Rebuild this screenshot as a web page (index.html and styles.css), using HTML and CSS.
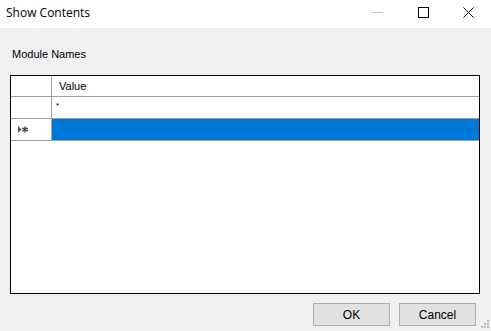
FILE: index.html
```html
<!DOCTYPE html>
<html lang="en">
<head>
    <meta charset="UTF-8">
    <title>Show Contents</title>
    <link rel="stylesheet" href="styles.css">
</head>
<body>
<div class="window">
    <!--标题栏-->
    <div class="title_bar">
        <span class="title_text">Show Contents</span>
        <div class="title_buttons">
            <span class="tb_btn tb_min">
                <svg width="11" height="11" viewBox="0 0 11 11"><line x1="0" y1="5.5" x2="11" y2="5.5" stroke="#c8c8c8" stroke-width="1"/></svg>
            </span>
            <span class="tb_btn tb_max">
                <svg width="11" height="11" viewBox="0 0 11 11"><rect x="0.5" y="0.5" width="10" height="10" fill="none" stroke="#000" stroke-width="1"/></svg>
            </span>
            <span class="tb_btn tb_close">
                <svg width="11" height="11" viewBox="0 0 11 11"><path d="M0.5 0.5 L10.5 10.5 M10.5 0.5 L0.5 10.5" stroke="#000" stroke-width="1"/></svg>
            </span>
        </div>
    </div>

    <div class="content">
        <p class="label">Module Names</p>

        <div class="grid">
            <div class="grid_row grid_head">
                <div class="row_head"></div>
                <div class="cell">Value</div>
            </div>
            <div class="grid_row">
                <div class="row_head"></div>
                <div class="cell cell_star">*</div>
            </div>
            <div class="grid_row">
                <div class="row_head">
                    <svg width="10" height="7" viewBox="0 0 10 7">
                        <polygon points="0,0 3.5,3.5 0,7" fill="#505050"/>
                        <path d="M7 0.5 V6.5 M4.2 2 L9.8 5 M9.8 2 L4.2 5" stroke="#505050" stroke-width="1.5"/>
                    </svg>
                </div>
                <div class="cell cell_selected"></div>
            </div>
        </div>

        <div class="buttons">
            <button class="btn" type="button">OK</button>
            <button class="btn" type="button">Cancel</button>
        </div>
    </div>

    <div class="size_grip">
        <svg width="8" height="8" viewBox="0 0 8 8" fill="#b8b8b8">
            <rect x="6" y="0" width="2" height="2"/>
            <rect x="3" y="3" width="2" height="2"/>
            <rect x="6" y="3" width="2" height="2"/>
            <rect x="0" y="6" width="2" height="2"/>
            <rect x="3" y="6" width="2" height="2"/>
            <rect x="6" y="6" width="2" height="2"/>
        </svg>
    </div>
</div>
</body>
</html>
```

FILE: styles.css
```css
* {
    margin: 0px;
    padding: 0px;
    box-sizing: border-box;
}

body {
    background-color: #f0f0f0;
    font-family: "Liberation Sans", Arial, sans-serif;
    font-size: 11px;
    color: #000;
}

.window {
    width: 491px;
    height: 331px;
    position: relative;
    display: flex;
    flex-direction: column;
}

/*标题栏*/
.title_bar {
    height: 28px;
    background-color: white;
    display: flex;
    align-items: center;
    justify-content: space-between;
}

.title_text {
    font-family: "Open Sans", "Noto Sans", sans-serif;
    font-size: 12px;
    padding-left: 6px;
    margin-top: -3px;
}

.title_buttons {
    display: flex;
    margin-top: -3px;
}

.tb_btn {
    width: 45px;
    height: 20px;
    display: flex;
    align-items: center;
    justify-content: center;
}

.tb_min {
    margin-right: 1px;
}

.content {
    flex: 1;
    padding: 19px 11px 0 10px;
    display: flex;
    flex-direction: column;
}

.label {
    padding-left: 2px;
    height: 28px;
    line-height: 14px;
}

/*数据表格*/
.grid {
    height: 219px;
    border: 1px solid #000;
    background-color: white;
}

.grid_row {
    display: flex;
    height: 22px;
    border-bottom: 1px solid #a0a0a0;
}

.grid_head {
    height: 21px;
}

.row_head {
    width: 41px;
    border-right: 1px solid #a0a0a0;
    display: flex;
    align-items: center;
    padding-left: 7px;
}

.cell {
    flex: 1;
    padding-left: 7px;
    line-height: 20px;
}

.cell_star {
    font-size: 8px;
    line-height: 18px;
    padding-left: 4px;
}

.cell_selected {
    background-color: #0078d7;
}

/*按钮*/
.buttons {
    display: flex;
    justify-content: flex-end;
    gap: 9px;
    padding-top: 9px;
    padding-right: 4px;
}

.btn {
    width: 77px;
    height: 23px;
    background-color: #e1e1e1;
    border: 1px solid #adadad;
    font-family: "Liberation Sans", Arial, sans-serif;
    font-size: 12px;
    color: #000;
}

.size_grip {
    position: absolute;
    right: 2px;
    bottom: 3px;
    line-height: 0;
}
```
